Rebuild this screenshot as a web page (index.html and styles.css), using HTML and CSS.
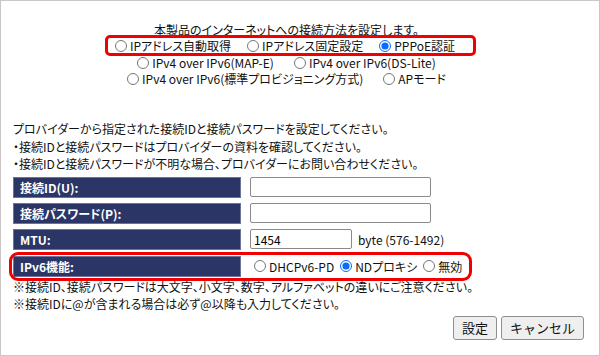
FILE: index.html
```html
<!DOCTYPE html>
<html lang="ja">
<head>
  <meta charset="UTF-8">
  <title>インターネット接続設定</title>
  <link rel="stylesheet" href="styles.css">
</head>
<body>
  <div class="frame">

    <div class="modes">
      <p class="lead">本製品のインターネットへの接続方法を設定します。</p>
      <div class="mode-row">
        <div class="hl-box">
          <label class="opt"><input type="radio" name="mode">IPアドレス自動取得</label>
          <label class="opt"><input type="radio" name="mode">IPアドレス固定設定</label>
          <label class="opt"><input type="radio" name="mode" checked>PPPoE認証</label>
        </div>
      </div>
      <div class="mode-row">
        <label class="opt"><input type="radio" name="mode">IPv4 over IPv6(MAP-E)</label>
        <label class="opt"><input type="radio" name="mode">IPv4 over IPv6(DS-Lite)</label>
      </div>
      <div class="mode-row">
        <label class="opt"><input type="radio" name="mode">IPv4 over IPv6(標準プロビジョニング方式)</label>
        <label class="opt"><input type="radio" name="mode">APモード</label>
      </div>
    </div>

    <div class="help">
      <p>プロバイダーから指定された接続IDと接続パスワードを設定してください。</p>
      <p>・接続IDと接続パスワードはプロバイダーの資料を確認してください。</p>
      <p>・接続IDと接続パスワードが不明な場合、プロバイダーにお問い合わせください。</p>
    </div>

    <div class="form">
      <div class="field">
        <div class="label">接続ID(U):</div>
        <div class="value"><input class="text" type="text"></div>
      </div>
      <div class="field">
        <div class="label">接続パスワード(P):</div>
        <div class="value"><input class="text" type="password"></div>
      </div>
      <div class="field">
        <div class="label">MTU:</div>
        <div class="value"><input class="text short" type="text" value="1454"><span class="unit">byte (576-1492)</span></div>
      </div>
      <div class="field hl-field">
        <div class="label">IPv6機能:</div>
        <div class="value">
          <label class="opt"><input type="radio" name="v6">DHCPv6-PD</label>
          <label class="opt"><input type="radio" name="v6" checked>NDプロキシ</label>
          <label class="opt"><input type="radio" name="v6">無効</label>
        </div>
      </div>
    </div>

    <div class="notes">
      <p>※接続ID、接続パスワードは大文字、小文字、数字、アルファベットの違いにご注意ください。</p>
      <p>※接続IDに@が含まれる場合は必ず@以降も入力してください。</p>
    </div>

    <div class="actions">
      <button class="btn">設定</button>
      <button class="btn">キャンセル</button>
    </div>

  </div>
</body>
</html>
```

FILE: styles.css
```css
* {
  box-sizing: border-box;
}

body {
  margin: 0;
  background-color: #fff;
  font-family: "Noto Sans CJK JP", "Noto Sans", sans-serif;
  font-size: 12px;
  font-feature-settings: "palt";
  color: #111;
}

p {
  margin: 0;
}

.frame {
  width: 600px;
  height: 356px;
  border: 1px solid #cbc6c6;
  padding: 22px 15px 0 12px;
}

/* connection mode */

.modes {
  padding-right: 24px;
}

.lead {
  text-align: center;
  line-height: 14px;
}

.mode-row {
  display: flex;
  justify-content: center;
  gap: 20px;
  line-height: 18px;
  margin-top: -2px;
}

.hl-box {
  display: flex;
  gap: 16px;
  height: 21px;
  align-items: center;
  padding: 0 18px 0 7px;
  border: 3px solid #f00000;
  border-radius: 5px;
  margin-left: 8px;
}

.opt {
  display: inline-flex;
  align-items: center;
  white-space: nowrap;
}

.opt input {
  width: 12px;
  height: 12px;
  margin: 0 3px 0 0;
  accent-color: #0a6cff;
}

/* help text */

.help {
  margin-top: 32px;
  line-height: 17.5px;
}

/* form table */

.form {
  width: 455px;
  margin-top: 4px;
  display: flex;
  flex-direction: column;
  gap: 5px;
}

.field {
  display: flex;
  align-items: center;
  gap: 9px;
  height: 21px;
}

.label {
  width: 228px;
  height: 21px;
  padding-left: 6px;
  line-height: 19px;
  background-color: #2b3666;
  border: 1px solid #6a739a;
  color: #fff;
  font-weight: bold;
}

.value {
  display: flex;
  align-items: center;
  gap: 6px;
}

.text {
  width: 181px;
  height: 20px;
  border: 1px solid #8a8a8a;
  border-radius: 2px;
  padding: 0 3px;
  font-family: inherit;
  font-size: 12px;
}

.text.short {
  width: 102px;
}

.unit {
  font-size: 12px;
}

.hl-field {
  outline: 3px solid #f00000;
  outline-offset: 1px;
  border-radius: 5px;
  margin-top: 1px;
}

.hl-field .value {
  gap: 6px;
  padding-left: 4px;
}

/* notes and buttons */

.notes {
  line-height: 17px;
  margin-top: 1px;
}

.actions {
  display: flex;
  justify-content: flex-end;
  gap: 4px;
  margin-top: 4px;
}

.btn {
  height: 24px;
  padding: 0 8px;
  font-family: inherit;
  font-size: 13px;
  background-color: #efefef;
  border: 1px solid #8f8f8f;
  border-radius: 3px;
  color: #111;
}
```
